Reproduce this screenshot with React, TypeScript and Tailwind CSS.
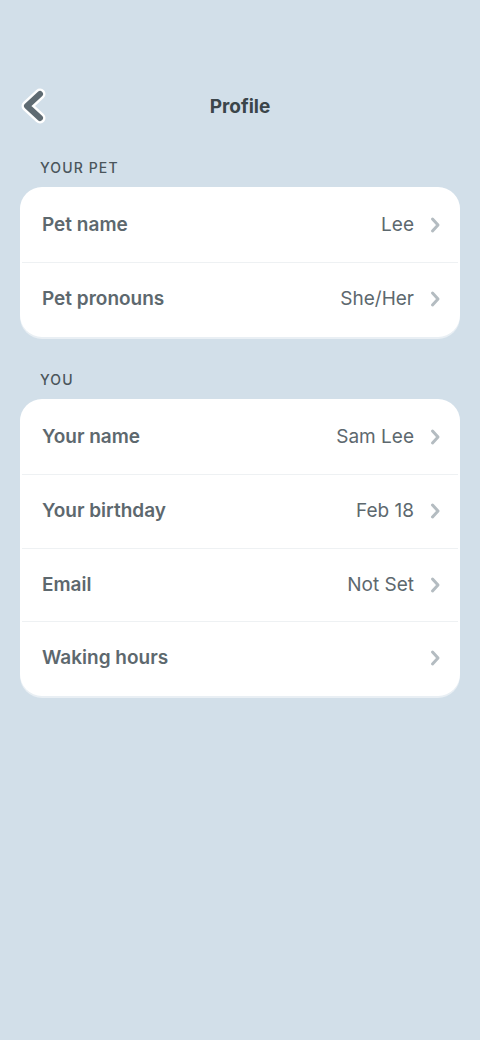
type Row = { label: string; value?: string };

const petRows: Row[] = [
  { label: "Pet name", value: "Lee" },
  { label: "Pet pronouns", value: "She/Her" },
];

const youRows: Row[] = [
  { label: "Your name", value: "Sam Lee" },
  { label: "Your birthday", value: "Feb 18" },
  { label: "Email", value: "Not Set" },
  { label: "Waking hours" },
];

function Chevron() {
  return (
    <svg width="12" height="18" viewBox="0 0 12 18" className="shrink-0">
      <path
        d="M3.5 3 L9 9 L3.5 15"
        fill="none"
        stroke="#b4bcc1"
        strokeWidth="3"
        strokeLinecap="round"
        strokeLinejoin="round"
      />
    </svg>
  );
}

function Section({ title, rows }: { title: string; rows: Row[] }) {
  return (
    <div className="flex flex-col">
      <h2 className="px-10 text-[14px] font-medium tracking-[0.08em] text-[#4a555b] leading-none mb-[12px]">
        {title}
      </h2>
      <div className="mx-5 bg-white rounded-[22px] shadow-[0_2px_0_rgba(255,255,255,0.5)] px-[2px] py-[1.5px]">
        {rows.map((row, i) => (
          <div
            key={row.label}
            className={
              "flex items-center justify-between h-[73.5px] pl-5 pr-[17px] " +
              (i > 0 ? "border-t border-[#eef1f3]" : "")
            }
          >
            <span className="text-[19px] font-semibold text-[#5d686e]">
              {row.label}
            </span>
            <div className="flex items-center gap-[15px]">
              {row.value && (
                <span className="text-[19px] text-[#5d686e]">{row.value}</span>
              )}
              <Chevron />
            </div>
          </div>
        ))}
      </div>
    </div>
  );
}

export default function App() {
  return (
    <div
      className="min-h-[1040px] w-full bg-[#d2dfe9] flex flex-col"
      style={{ fontFamily: "Inter, 'Noto Sans', sans-serif" }}
    >
      <header className="relative flex items-center justify-center mt-[89px] h-9">
        <button className="absolute left-[16px] -top-px w-9 h-9">
          <svg width="36" height="36" viewBox="0 0 36 36">
            <path
              d="M24 6 L11 18 L24 30"
              fill="none"
              stroke="#ffffff"
              strokeWidth="11"
              strokeLinecap="round"
              strokeLinejoin="round"
            />
            <path
              d="M24 6 L11 18 L24 30"
              fill="none"
              stroke="#5f6b72"
              strokeWidth="6"
              strokeLinecap="round"
              strokeLinejoin="round"
            />
          </svg>
        </button>
        <h1 className="text-[19px] font-bold text-[#3b454a]">Profile</h1>
      </header>
      <div className="mt-[36px]">
        <Section title="YOUR PET" rows={petRows} />
      </div>
      <div className="mt-[36px]">
        <Section title="YOU" rows={youRows} />
      </div>
    </div>
  );
}
